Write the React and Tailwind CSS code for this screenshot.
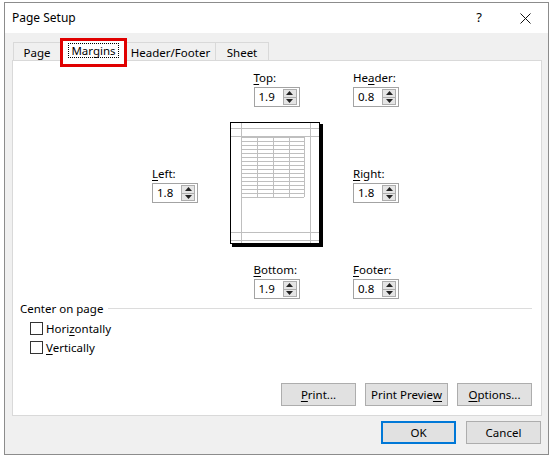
import React from "react";

const U = ({ children }) => <span className="underline underline-offset-[2px]">{children}</span>;

const Spin = ({ value }) => (
  <div className="flex h-[20px] w-[46px] items-center border border-[#a3a3a3] bg-white">
    <span className="flex-1 pl-[4px] leading-none">{value}</span>
    <div className="mr-[2px] flex h-[16px] w-[14px] flex-col border border-[#adadad] bg-[#e5e5e5]">
      <div className="flex flex-1 items-center justify-center border-b border-[#adadad]">
        <svg width="7" height="4" viewBox="0 0 7 4"><path d="M0 4 L3.5 0 L7 4 Z" fill="#222" /></svg>
      </div>
      <div className="flex flex-1 items-center justify-center">
        <svg width="7" height="4" viewBox="0 0 7 4"><path d="M0 0 L3.5 4 L7 0 Z" fill="#222" /></svg>
      </div>
    </div>
  </div>
);

const Field = ({ label, value }) => (
  <div className="flex flex-col">
    <span className="mb-[3px] h-[12px] leading-[12px]">{label}</span>
    <Spin value={value} />
  </div>
);

const PagePreview = () => {
  const rows = [];
  for (let y = 15; y <= 75; y += 4) rows.push(y);
  const cols = [11, 27, 43, 59, 74];
  return (
    <svg width="93" height="125" viewBox="0 0 93 125">
      <rect x="2" y="2" width="91" height="123" fill="#000" />
      <rect x="0.5" y="0.5" width="89" height="121" fill="#fff" stroke="#000" />
      <g stroke="#bfbfbf" strokeWidth="1">
        <line x1="11.5" y1="1" x2="11.5" y2="121" />
        <line x1="80.5" y1="1" x2="80.5" y2="121" />
        <line x1="1" y1="6.5" x2="89" y2="6.5" />
        <line x1="1" y1="14.5" x2="89" y2="14.5" />
        <line x1="1" y1="110.5" x2="89" y2="110.5" />
        <line x1="1" y1="118.5" x2="89" y2="118.5" />
        {rows.map((y) => (
          <line key={y} x1="11" y1={y + 0.5} x2="74" y2={y + 0.5} />
        ))}
        {cols.map((x) => (
          <line key={x} x1={x + 0.5} y1="15" x2={x + 0.5} y2="75" />
        ))}
      </g>
    </svg>
  );
};

const Checkbox = ({ children }) => (
  <div className="flex h-[19px] items-center">
    <span className="h-[13px] w-[13px] border border-[#333] bg-white" />
    <span className="ml-[3px]">{children}</span>
  </div>
);

const Btn = ({ w, children, def }) => (
  <div
    className={`flex h-[23px] items-center justify-center border bg-[#e1e1e1] ${w} ${
      def ? "border-[#0078d7] shadow-[inset_0_0_0_1px_#0078d7]" : "border-[#adadad]"
    }`}
  >
    {children}
  </div>
);

export default function App() {
  return (
    <div className="h-[460px] w-[554px] bg-white pl-[4px] pt-[2px] font-['Noto_Sans',sans-serif] text-[11.5px] text-black">
      <div className="flex h-[453px] w-[545px] flex-col border border-[#8c8c8c] bg-[#f0f0f0]">
        {/* title bar */}
        <div className="flex h-[30px] shrink-0 items-center bg-white pl-[7px]">
          <span className="flex-1 text-[12px]">Page Setup</span>
          <span className="w-[46px] text-center text-[13px]">?</span>
          <span className="flex w-[46px] justify-center">
            <svg width="11" height="11" viewBox="0 0 11 11">
              <path d="M0.5 0.5 L10.5 10.5 M10.5 0.5 L0.5 10.5" stroke="#111" strokeWidth="1" />
            </svg>
          </span>
        </div>

        <div className="flex flex-1 flex-col pl-[7px] pr-[6px] pt-[5px]">
          {/* tabs */}
          <div className="relative z-10 flex h-[22px] items-start pl-[1px]">
            <div className="mt-[4px] flex h-[18px] w-[48px] items-center justify-center border border-b-0 border-[#d9d9d9] pt-[2px]">
              Page
            </div>
            <div className="relative flex h-[23px] w-[65px] items-center justify-center border border-b-0 border-[#d9d9d9] bg-white pt-[1px]">
              <span className="border border-dotted border-black px-[2px] leading-[13px]">Margins</span>
              <span className="absolute left-[-2px] top-[-1px] h-[29px] w-[67px] border-[3px] border-[#e00000]" />
            </div>
            <div className="mt-[4px] flex h-[18px] w-[90px] items-center justify-center border border-b-0 border-l-0 border-[#d9d9d9] pt-[2px]">
              Header/Footer
            </div>
            <div className="mt-[4px] flex h-[18px] w-[53px] items-center justify-center border border-b-0 border-l-0 border-[#d9d9d9] pt-[2px]">
              Sheet
            </div>
          </div>

          {/* tab panel */}
          <div className="flex h-[356px] flex-col border border-[#d9d9d9] bg-white pt-[11px]">
            <div className="ml-[139px] flex">
              <div className="flex w-[78px] items-center">
                <Field label={<><U>L</U>eft:</>} value="1.8" />
              </div>
              <div className="flex w-[93px] flex-col items-center">
                <Field label={<><U>T</U>op:</>} value="1.9" />
                <div className="mt-[15px]">
                  <PagePreview />
                </div>
                <div className="mt-[17px]">
                  <Field label={<><U>B</U>ottom:</>} value="1.9" />
                </div>
              </div>
              <div className="ml-[30px] flex flex-col justify-between">
                <Field label={<>He<U>a</U>der:</>} value="0.8" />
                <Field label={<><U>R</U>ight:</>} value="1.8" />
                <Field label={<><U>F</U>ooter:</>} value="0.8" />
              </div>
            </div>

            <div className="mt-[2px] flex items-center pl-[7px] pr-[9px]">
              <span className="leading-[15px]">Center on page</span>
              <span className="ml-[5px] h-px flex-1 bg-[#dcdcdc]" />
            </div>
            <div className="mt-[3px] flex flex-col pl-[17px]">
              <Checkbox>Hori<U>z</U>ontally</Checkbox>
              <Checkbox><U>V</U>ertically</Checkbox>
            </div>

            <div className="mt-auto flex justify-end gap-[9px] pb-[9px] pr-[9px]">
              <Btn w="w-[75px]"><U>P</U>rint...</Btn>
              <Btn w="w-[83px]">Print Previe<U>w</U></Btn>
              <Btn w="w-[75px]"><U>O</U>ptions...</Btn>
            </div>
          </div>

          <div className="mt-[5px] flex justify-end gap-[10px] pr-[1px]">
            <Btn w="w-[75px]" def>OK</Btn>
            <Btn w="w-[75px]">Cancel</Btn>
          </div>
        </div>
      </div>
    </div>
  );
}
